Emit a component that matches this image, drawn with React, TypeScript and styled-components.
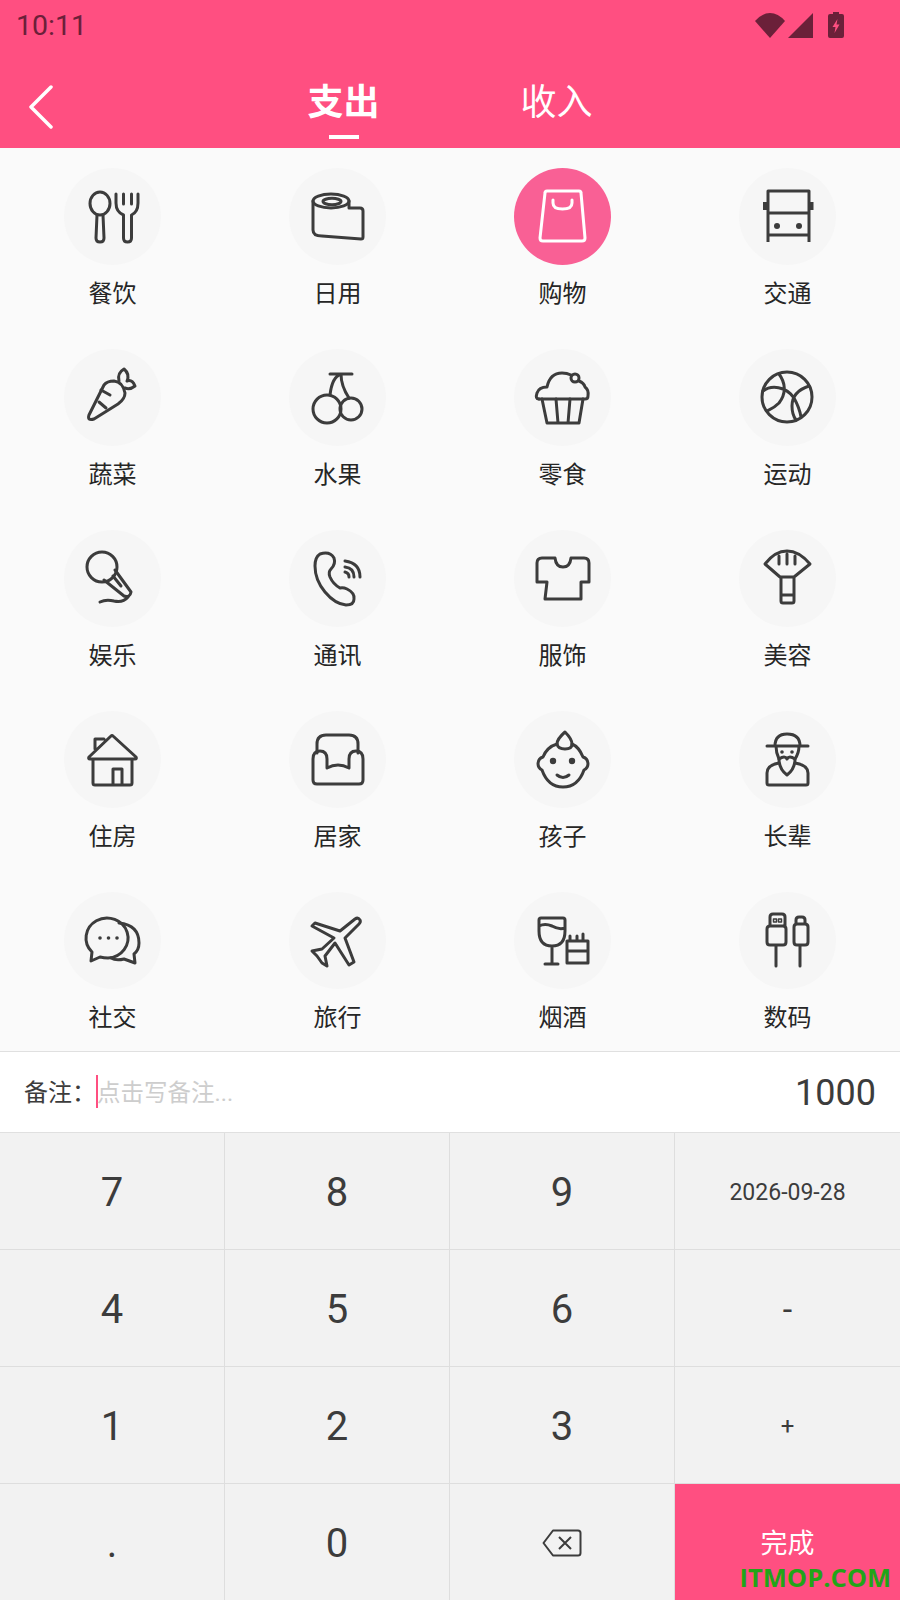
import { ReactNode } from 'react'
import styled, { createGlobalStyle } from 'styled-components'

const PINK = '#ff4f81'
const CJK = '"Noto Sans CJK SC", "Noto Sans", sans-serif'
const LATIN = 'Roboto, "Noto Sans CJK SC", sans-serif'

interface Category {
  name: string
  icon: ReactNode
}

// 图标坐标都按 97x97 的圆来画
const categories: Category[] = [
  {
    name: '餐饮',
    icon: (
      <>
        <ellipse cx="36" cy="35.5" rx="10" ry="11.500" />
        <path d="M33 47 32 70Q32 74 36 74 40 74 40 70L39 47" />
        <path d="M52 26V35Q52 44 59.500 47V70Q59.500 74 63.500 74 67.500 74 67.500 70V47Q74 44 74 35V26M59.500 26V36M67.500 26V36" />
      </>
    ),
  },
  {
    name: '日用',
    icon: (
      <>
        <path d="M24 33V62Q24 68 33 68L72 71Q74 71 74 69V43Q74 40 71 40H60V33" />
        <ellipse cx="42" cy="33" rx="18" ry="7" />
        <ellipse cx="43" cy="33.500" rx="9" ry="3.200" />
      </>
    ),
  },
  {
    name: '购物',
    icon: (
      <>
        <path d="M33 23H65Q67 23 67 25L71 70Q71 73 68 73H29Q26 73 26 70L31 25Q31 23 33 23Z" />
        <path d="M39 32V35Q39 41 48.500 41 58 41 58 35V32" />
      </>
    ),
  },
  {
    name: '交通',
    icon: (
      <>
        <path d="M29 74V23H70V74M29 45H70M29 67H70" strokeLinecap="butt" />
        <path d="M26 34V42M72.500 34V42" strokeWidth="4" strokeLinecap="butt" />
        <circle cx="38" cy="58" r="3" fill="currentColor" stroke="none" />
        <circle cx="60" cy="58" r="3" fill="currentColor" stroke="none" />
      </>
    ),
  },
  {
    name: '蔬菜',
    icon: (
      <>
        <path d="M25 66 40 36Q43 32 50 32 59 33 61 44 61 50 54 55L30 70Q23 72 25 66Z" />
        <path d="M37 41 46 46M35 53 42 59" />
        <path d="M55 32Q53 24 60 20 66 25 63 32 68 30 71 37 66 41 61 39" />
      </>
    ),
  },
  {
    name: '水果',
    icon: (
      <>
        <circle cx="38" cy="60" r="14" />
        <circle cx="62" cy="60" r="11" />
        <path d="M41 25H63M52 25Q43 28 41 46M52 25Q52 37 60 49" />
      </>
    ),
  },
  {
    name: '零食',
    icon: (
      <>
        <path d="M28 50 33 74H65L69 50M42 50 44 74M56 50 54 74" />
        <path d="M25 50Q21 50 23 44 25 38 33 38 36 24 48 24 53 24 57 26" />
        <path d="M65 32Q70 34 71 38 75 41 74 47 74 50 71 50H25" />
        <circle cx="61" cy="29" r="4" />
      </>
    ),
  },
  {
    name: '运动',
    icon: (
      <>
        <circle cx="48" cy="48" r="25" />
        <path d="M40 25C46 33 48 44 40 54 35 59 32 60 28 62M24 42C32 36 47 37 55 49 60 58 61 62 62 68M70 37C58 41 53 48 53 57 53 64 54 67 57 71" />
      </>
    ),
  },
  {
    name: '娱乐',
    icon: (
      <>
        <circle cx="38" cy="37" r="15" />
        <path d="M40 50 60 66Q66 68 67 62L51 40M49 46 57 56" />
        <path d="M36 72Q42 69 50 71 59 73 64 67" />
      </>
    ),
  },
  {
    name: '通讯',
    icon: (
      <>
        <path d="M31 24Q26 27 26 36 26 50 36 62 46 74 57 75 65 75 65 69 66 63 58 59 54 57 51 58 44 54 41 47 39 42 42 39 47 34 45 28 41 21 31 24Z" />
        <path d="M56 42Q60 43 60 47M56 37Q65 38 65 47M56 31Q71 33 71 47" />
      </>
    ),
  },
  {
    name: '服饰',
    icon: <path d="M28 28H41Q42 37 49 37 56 37 57 28H70Q75 28 75 33V52H67V69H31L33 52H23V33Q23 28 28 28Z" />,
  },
  {
    name: '美容',
    icon: (
      <path d="M26 34Q36 21 48 21 60 21 71 34L55 47H41ZM40 26V34M48 24V34M56 26V34M42 47V71Q42 73 44 73H53Q55 73 55 71V47M42 65H55" />
    ),
  },
  {
    name: '住房',
    icon: (
      <path d="M29 48V72Q29 74 31 74H66Q68 74 68 72V48M25 46 47 25Q48 24 49 25L72 46Q73 48 71 48H26Q24 48 25 46ZM31 38V28H40M49 74V58H58V74" />
    ),
  },
  {
    name: '居家',
    icon: (
      <>
        <path d="M28 42V33Q28 24 37 24H60Q69 24 69 33V42" />
        <path d="M24 48Q24 40 31 40 38 40 38 48V57Q49 51 60 57V48Q60 40 67 40 74 40 74 48V69Q74 73 70 73H28Q24 73 24 69Z" />
      </>
    ),
  },
  {
    name: '孩子',
    icon: (
      <>
        <path d="M43 33Q33 36 29 46A7 7 0 0 0 28 59Q34 76 49 76 64 76 70 59A7 7 0 0 0 69 46Q65 36 58 33" />
        <path d="M51 21Q43 28 43 33 44 38 51 38 58 38 58 33 58 28 51 21Z" />
        <circle cx="39" cy="50" r="3.200" fill="currentColor" stroke="none" />
        <circle cx="58" cy="50" r="3.200" fill="currentColor" stroke="none" />
        <path d="M43 64Q49 69 55 64" />
      </>
    ),
  },
  {
    name: '长辈',
    icon: (
      <>
        <path d="M28 35H69M36 35Q36 23 48 23 61 23 61 35M37 35Q37 42 40 48M60 35Q60 42 56 48" />
        <path d="M40 48Q46 44 48 48 50 44 56 48 56 58 48 64 40 58 40 48Z" />
        <path d="M40 52Q28 54 28 62V72Q28 74 30 74H67Q69 74 69 72V62Q69 54 56 52" />
        <circle cx="43" cy="41" r="1.800" fill="currentColor" stroke="none" />
        <circle cx="53" cy="41" r="1.800" fill="currentColor" stroke="none" />
      </>
    ),
  },
  {
    name: '社交',
    icon: (
      <>
        <path d="M44 66A21 20 0 1 0 28 60L27 69 36 65Q40 66 44 66Z" />
        <path d="M55 31Q75 33 75 51 75 58 70 62L71 71 60 67Q52 69 47 66" />
        <circle cx="36" cy="46" r="1.800" fill="currentColor" stroke="none" />
        <circle cx="44.500" cy="46" r="1.800" fill="currentColor" stroke="none" />
        <circle cx="53" cy="46" r="1.800" fill="currentColor" stroke="none" />
      </>
    ),
  },
  {
    name: '旅行',
    icon: (
      <path d="M66 27Q69 25 71 28 72 30 70 32L56 46 65 70 60 73 46 51 36 64 38 74 33 71 28 64 23 59 33 57 45 46 23 34 26 31 51 39Z" />
    ),
  },
  {
    name: '烟酒',
    icon: (
      <>
        <path d="M25 28Q25 26 27 26H49Q51 26 51 28V39Q51 54 38 54 25 54 25 39ZM38 54V72M31 72H44M25 34Q31 31 38 34 45 38 51 36" />
        <path d="M53 49H74V71H53ZM53 59H74M56 49V44M63 49V44M69 49V42" />
      </>
    ),
  },
  {
    name: '数码',
    icon: (
      <>
        <path d="M28 37Q28 34 31 34H44Q47 34 47 37V50Q47 53 44 53H31Q28 53 28 50ZM31 34V25Q31 22 34 22H43Q46 22 46 25V34M37 53V74" />
        <path d="M55 35Q55 32 58 32H66Q69 32 69 35V50Q69 53 66 53H58Q55 53 55 50ZM57 32V28Q57 25 60 25H63Q66 25 66 28V32M61 53V74" />
        <path d="M34.500 27H37.500V30H34.500ZM39.500 27H42.500V30H39.500Z" strokeWidth="1.500" />
      </>
    ),
  },
]

const keys = ['7', '8', '9', '2026-09-28', '4', '5', '6', '-', '1', '2', '3', '+', '.', '0']

const keyFontSize = function (key: string) {
  if (key === '-') return 34
  if (key === '+') return 24
  return key.length > 1 ? 23 : 40
}

const App = function () {
  return (
    <Page>
      <GlobalStyle />
      <Header>
        <StatusBar>
          <Clock>10:11</Clock>
          <StatusIcons>
            <svg width="32" height="26" viewBox="0 0 32 26">
              <path d="M1 9Q8 1 16 1 24 1 31 9L16 26Z" fill="#6b2039" />
            </svg>
            <svg width="26" height="26" viewBox="0 0 26 26">
              <path d="M25 1V26H0Z" fill="#6b2039" />
            </svg>
            <BatteryIcon width="16" height="26" viewBox="0 0 16 26">
              <path d="M5 0H11V2H14Q16 2 16 4V24Q16 26 14 26H2Q0 26 0 24V4Q0 2 2 2H5Z" fill="#6b2039" />
              <path d="M9.500 7 4.500 15H7.500L6.500 21 11.500 12.500H8.500Z" fill={PINK} />
            </BatteryIcon>
          </StatusIcons>
        </StatusBar>
        <Toolbar>
          <BackIcon width="26" height="44" viewBox="0 0 26 44">
            <path d="M23 2 3 22 23 42" />
          </BackIcon>
          <Tabs>
            <Tab $active>
              支出
              <TabMark />
            </Tab>
            <Tab>收入</Tab>
          </Tabs>
        </Toolbar>
      </Header>

      <CategoryGrid>
        {categories.map((category) => (
          <CategoryItem key={category.name}>
            <IconCircle $active={category.name === '购物'}>
              <CategoryIcon viewBox="0 0 97 97">{category.icon}</CategoryIcon>
            </IconCircle>
            <CategoryName>{category.name}</CategoryName>
          </CategoryItem>
        ))}
      </CategoryGrid>

      <RemarkBar>
        <RemarkLabel>备注：</RemarkLabel>
        <RemarkCursor />
        <RemarkPlaceholder>点击写备注...</RemarkPlaceholder>
        <Amount>1000</Amount>
      </RemarkBar>

      <Keypad>
        {keys.map((key) => (
          <Key key={key} $size={keyFontSize(key)}>
            {key}
          </Key>
        ))}
        <Key $size={40}>
          <svg width="40" height="28" viewBox="0 0 40 28" fill="none" stroke="#3c3c3c" strokeWidth="2">
            <path d="M11 1.500H36Q38.500 1.500 38.500 4V24Q38.500 26.500 36 26.500H11L1.500 14Z" strokeLinejoin="round" />
            <path d="M17 8 29 20M29 8 17 20" />
          </svg>
        </Key>
        <DoneKey>
          完成
          <Watermark>ITMOP.COM</Watermark>
        </DoneKey>
      </Keypad>
    </Page>
  )
}

export default App

const GlobalStyle = createGlobalStyle`
  html, body {
    margin: 0;
    padding: 0;
  }
  * {
    box-sizing: border-box;
  }
`

const Page = styled.div`
  width: 900px;
  height: 1600px;
  overflow: hidden;
  display: flex;
  flex-direction: column;
  background: #fafafa;
  font-family: ${CJK};
`

const Header = styled.header`
  height: 148px;
  flex-shrink: 0;
  background: ${PINK};
`

const StatusBar = styled.div`
  height: 50px;
  padding: 0 56px 0 16px;
  display: flex;
  justify-content: space-between;
  align-items: center;
`

const Clock = styled.span`
  font-family: ${LATIN};
  font-size: 28.5px;
  color: #6b2039;
`

const StatusIcons = styled.div`
  display: flex;
  align-items: center;
  gap: 2px;
`

const BatteryIcon = styled.svg`
  margin-left: 12px;
`

const Toolbar = styled.div`
  height: 98px;
  display: grid;
  grid-template-columns: 1fr auto 1fr;
  align-items: start;
`

const BackIcon = styled.svg`
  margin: 35px 0 0 28px;
  fill: none;
  stroke: #fff;
  stroke-width: 3.5;
  stroke-linecap: round;
  stroke-linejoin: round;
`

const Tabs = styled.div`
  display: flex;
  gap: 141px;
  padding-top: 26px;
`

const Tab = styled.div<{ $active?: boolean }>`
  width: 72px;
  display: flex;
  flex-direction: column;
  align-items: center;
  white-space: nowrap;
  font-size: 36px;
  line-height: 46px;
  font-weight: ${(props) => (props.$active ? 700 : 400)};
  color: #fff;
`

const TabMark = styled.span`
  width: 30px;
  height: 4px;
  margin-top: 13px;
  background: #fff;
`

const CategoryGrid = styled.div`
  height: 903px;
  flex-shrink: 0;
  padding-top: 20px;
  display: grid;
  grid-template-columns: repeat(4, 225px);
  grid-auto-rows: 159px;
  row-gap: 22px;
  background: #fafafa;
`

const CategoryItem = styled.div`
  display: flex;
  flex-direction: column;
  align-items: center;
`

const IconCircle = styled.div<{ $active?: boolean }>`
  width: 97px;
  height: 97px;
  border-radius: 50%;
  background: ${(props) => (props.$active ? '#f96095' : '#f6f6f6')};
  color: ${(props) => (props.$active ? '#fff' : '#3c3c3c')};
`

const CategoryIcon = styled.svg`
  display: block;
  width: 97px;
  height: 97px;
  fill: none;
  stroke: currentColor;
  stroke-width: 3;
  stroke-linecap: round;
  stroke-linejoin: round;
`

const CategoryName = styled.div`
  margin-top: 10px;
  font-size: 24px;
  line-height: 34px;
  color: #262626;
`

const RemarkBar = styled.div`
  height: 82px;
  flex-shrink: 0;
  padding: 0 24px;
  display: flex;
  align-items: center;
  background: #fff;
  border-top: 1px solid #e0e0e0;
  border-bottom: 1px solid #e0e0e0;
`

const RemarkLabel = styled.span`
  width: 72px;
  padding-bottom: 3px;
  font-size: 24px;
  color: #3c3c3c;
`

const RemarkCursor = styled.span`
  width: 2px;
  height: 33px;
  margin-bottom: 2px;
  background: ${PINK};
`

const RemarkPlaceholder = styled.span`
  margin-left: -1px;
  padding-bottom: 3px;
  font-family: ${LATIN};
  font-size: 23.5px;
  color: #cdcdcd;
`

const Amount = styled.span`
  margin-left: auto;
  padding-top: 2px;
  font-family: ${LATIN};
  font-size: 36px;
  color: #3c3c3c;
`

const Keypad = styled.div`
  flex: none;
  display: grid;
  grid-template-columns: repeat(4, 225px);
  grid-auto-rows: 117px;
  background: #f2f2f2;
`

const Key = styled.div<{ $size: number }>`
  display: flex;
  align-items: center;
  justify-content: center;
  padding-top: 2px;
  border-right: 1px solid #dedede;
  border-bottom: 1px solid #dedede;
  font-family: ${LATIN};
  font-size: ${(props) => props.$size}px;
  color: #3c3c3c;
  &:nth-child(4n) {
    border-right: none;
  }
`

const DoneKey = styled.div`
  position: relative;
  display: flex;
  align-items: center;
  justify-content: center;
  padding-bottom: 2px;
  background: ${PINK};
  font-size: 27px;
  color: #fff;
`

const Watermark = styled.span`
  position: absolute;
  right: 9px;
  bottom: 9px;
  font-family: "Open Sans", sans-serif;
  font-size: 25.5px;
  line-height: 30px;
  font-weight: 700;
  color: #22a418;
`
